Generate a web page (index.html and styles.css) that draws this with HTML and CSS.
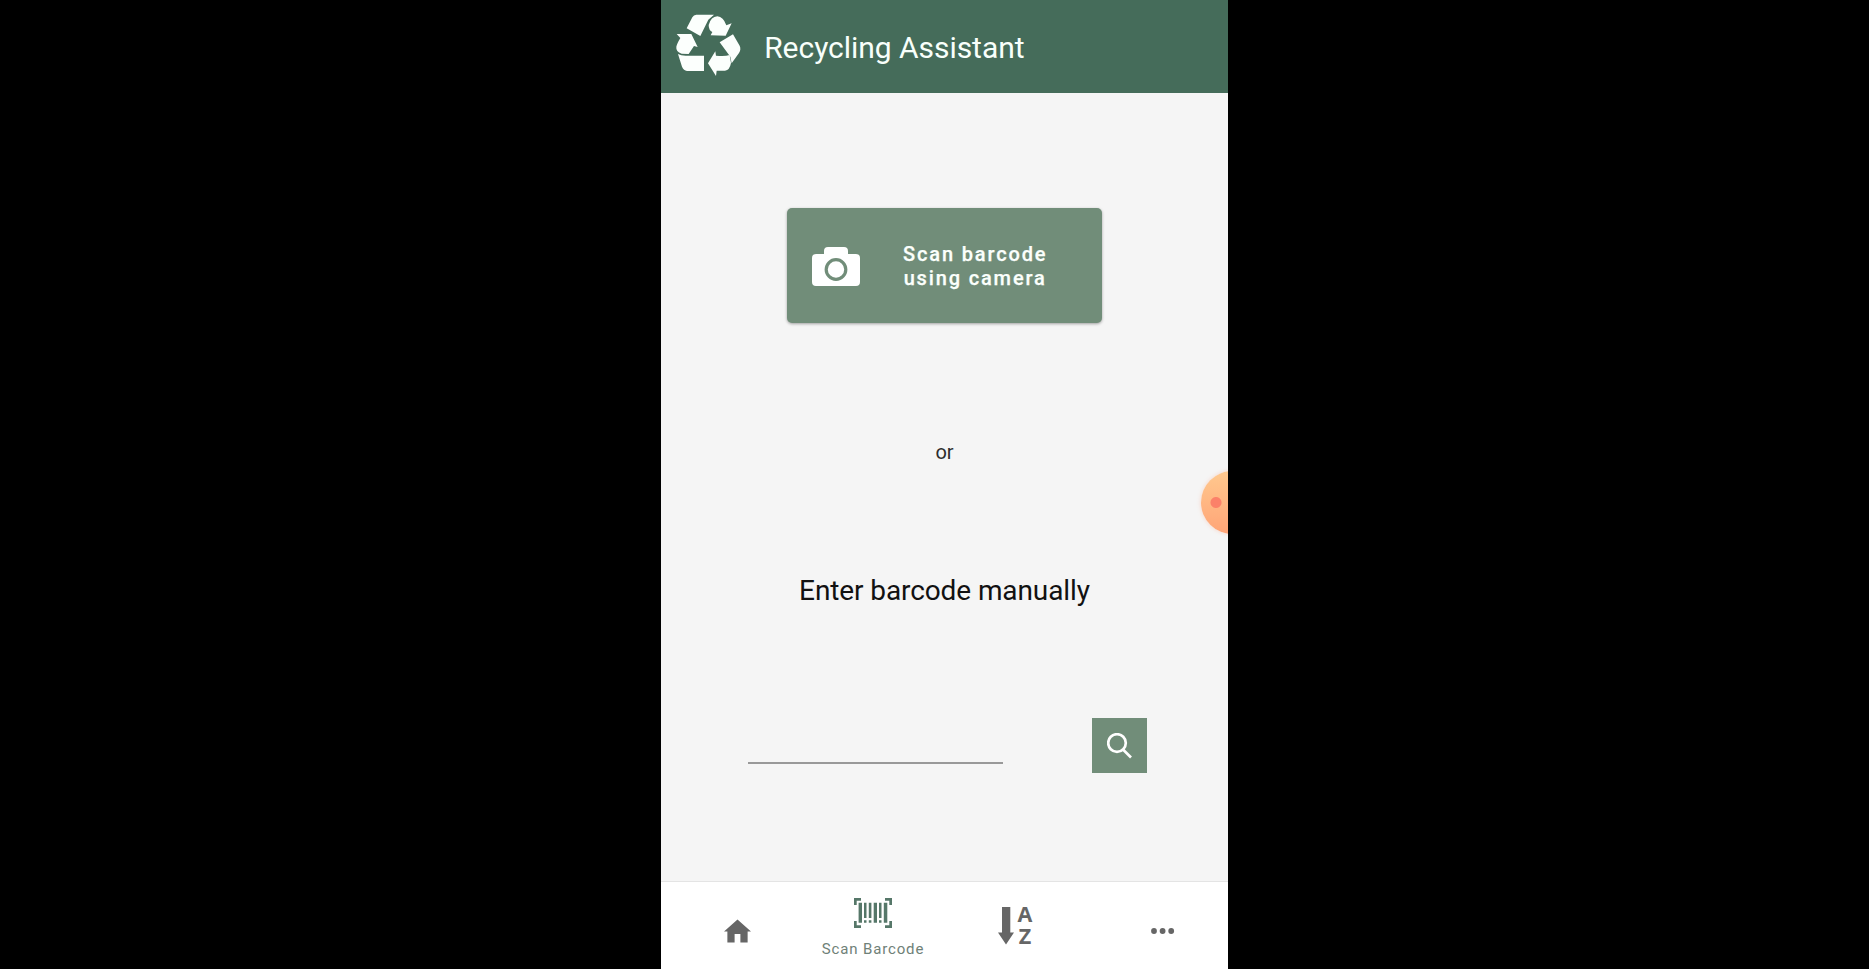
FILE: index.html
```html
<!DOCTYPE html>
<html lang="en">
<head>
<meta charset="utf-8">
<title>Recycling Assistant</title>
<link rel="stylesheet" href="styles.css">
</head>
<body>
<div class="phone">
  <header class="header">
    <svg class="logo" viewBox="60 40 200 190" fill="#fcfffd">
      <path d="M124 45H177L160 60L136 109L95 86L112 53Q116 46 124 45Z"/>
      <path d="M161 76Q168 51 187 50Q205 51 214 77L230 71L212 108L167 107L172 97Q161 92 161 76Z"/>
      <path d="M234 104L254 138Q259 149 252 160L230 191L226 171L194 128Z"/>
      <path d="M159 191L181 155L183 168Q210 171 224 166L228 190Q224 212 210 213H185L183 229Z"/>
      <path d="M69 163Q78 168 92 168H147V214H96Q86 212 81 201Z"/>
      <path d="M65 103H109L128 142L117 139L101 163L80 162Q62 156 64 141Q66 132 76 115Z"/>
    </svg>
    <h1 class="title">Recycling Assistant</h1>
  </header>
  <main class="content">
    <button class="scan">
      <svg class="camera" width="48" height="39" viewBox="0 0 48 39">
        <path d="M4 7H12V4Q12 0 16 0H32Q36 0 36 4V7H44Q48 7 48 11V35Q48 39 44 39H4Q0 39 0 35V11Q0 7 4 7Z" fill="#fff"/>
        <circle cx="24" cy="22.5" r="9.8" fill="none" stroke="#718d79" stroke-width="3.2"/>
      </svg>
      <span class="scan-text">Scan barcode<br>using camera</span>
    </button>
    <p class="or">or</p>
    <h2 class="manual">Enter barcode manually</h2>
    <div class="entry">
      <input class="barcode-input" type="text" aria-label="Barcode">
      <button class="search" aria-label="Search">
        <svg width="26" height="26" viewBox="0 0 26 26" fill="none" stroke="#fff" stroke-width="2.7"><circle cx="10" cy="10" r="8.8"/><path d="M16 16.5L24 24.5"/></svg>
      </button>
    </div>
    <div class="bubble"></div>
  </main>
  <nav class="nav">
    <a class="tab home"><svg width="27" height="24" viewBox="0 0 28 24" fill="#666"><path d="M14 0L28 12.5H24.5V24H17V15H11V24H3.5V12.5H0Z"/></svg></a>
    <a class="tab active">
      <svg width="38" height="30" viewBox="0 0 38 30" fill="#567769"><path d="M0 0H7V2.7H2.7V7H0ZM31 0H38V7H35.3V2.7H31ZM0 23H2.7V27.3H7V30H0ZM35.3 23H38V30H31V27.3H35.3ZM4.6 4.7H8V24.7H4.6ZM10 4.7H12.5V20H10ZM10 22.3H12.5V24.7H10ZM14.8 4.7H17.4V20H14.8ZM14.8 22.3H17.4V24.7H14.8ZM19.7 4.7H23V24.7H19.7ZM25 4.7H27.5V20H25ZM25 22.3H27.5V24.7H25ZM29.8 4.7H33.3V24.7H29.8Z"/></svg>
      <span class="label">Scan Barcode</span>
    </a>
    <a class="tab sort">
      <svg width="16" height="38" viewBox="0 0 16 38" fill="#666"><path d="M4 0H12.3V25.5H16L8 37.5L0 25.5H4Z"/></svg>
      <span class="letters"><span>A</span><span>Z</span></span>
    </a>
    <a class="tab more"><svg width="24" height="6" viewBox="0 0 24 6" fill="#666"><circle cx="3" cy="3" r="2.9"/><circle cx="11.6" cy="3" r="2.9"/><circle cx="20.2" cy="3" r="2.9"/></svg></a>
  </nav>
</div>
</body>
</html>
```
FILE: styles.css
```css
* { box-sizing: border-box; }
body { margin: 0; background: #000; font-family: Roboto, sans-serif; }
h1, h2, p { margin: 0; font-weight: 400; }
button { border: 0; padding: 0; font-family: inherit; }
svg { display: block; flex: none; }
.phone { width: 567px; height: 969px; margin-left: 661px; background: #f5f5f5; display: flex; flex-direction: column; overflow: hidden; }
.header { height: 93px; flex: none; background: #456c5a; display: flex; align-items: flex-start; padding: 13px 0 0 14px; }
.logo { width: 66.67px; height: 63.33px; }
.title { margin: 17px 0 0 22.5px; color: #f8fffb; font-size: 30px; line-height: 36px; letter-spacing: -.04px; white-space: nowrap; }
.content { position: relative; flex: 1; display: flex; flex-direction: column; align-items: center; padding-top: 115px; }
.scan { width: 315px; height: 115px; border-radius: 5px; background: #718d79; box-shadow: 0 1px 3px rgba(0,0,0,.35); display: flex; align-items: center; padding: 1px 0 0 25px; color: #fbfffc; }
.scan-text { margin-left: 43px; font-size: 20px; font-weight: 500; line-height: 24px; letter-spacing: 1.85px; text-align: center; white-space: nowrap; -webkit-text-stroke: .25px #fbfffc; }
.or { margin-top: 117px; font-size: 20px; line-height: 24px; color: #2d2d2d; }
.manual { margin-top: 109px; font-size: 28px; line-height: 36px; letter-spacing: -.1px; color: #111; white-space: nowrap; }
.entry { display: flex; align-items: flex-start; gap: 88px; width: 399px; margin: 109px 0 0 6px; }
.barcode-input { width: 255px; margin-right: 1px; height: 46px; border: 0; border-bottom: 2px solid #999; background: none; outline: 0; padding: 0; }
.search { width: 55px; height: 55px; background: #718d79; display: flex; align-items: center; justify-content: center; }
.bubble { position: absolute; left: 540px; top: 378px; width: 63px; height: 63px; border-radius: 50%; background: radial-gradient(circle at 15px 31.5px, #fb8169 0 5px, transparent 6px), linear-gradient(#ffc98e, #ffa477); box-shadow: 0 0 4px rgba(255,150,110,.35); }
.nav { height: 88px; flex: none; border-top: 1px solid #e4e4e4; background: #fff; display: flex; align-items: flex-start; }
.tab { display: flex; }
.home { margin: 37px 0 0 63px; }
.active { width: 120px; margin: 16px 0 0 62px; flex-direction: column; align-items: center; }
.label { margin-top: 11px; font-size: 15px; line-height: 20px; letter-spacing: .85px; color: #6f8178; white-space: nowrap; }
.sort { margin: 25px 0 0 65px; gap: 3px; }
.letters { display: flex; flex-direction: column; width: 16px; font: 700 21.5px/22px "Open Sans", sans-serif; color: #666; align-items: center; margin-top: -4px; }
.more { margin: 46px 0 0 117.5px; }
```
